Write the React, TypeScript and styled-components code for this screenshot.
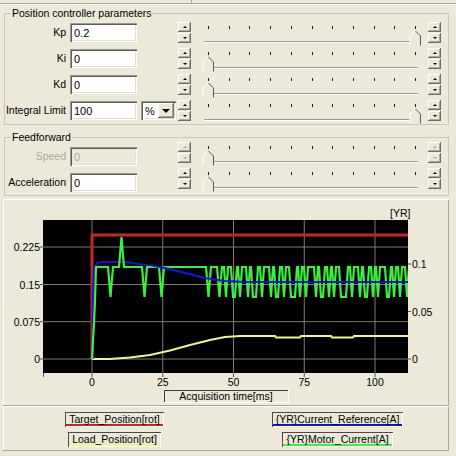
import React from 'react';
import styled, { createGlobalStyle } from 'styled-components';

const GlobalStyle = createGlobalStyle`
  html, body {
    margin: 0;
    padding: 0;
    background: #ece9d8;
  }
  body {
    width: 456px;
    height: 456px;
    overflow: hidden;
    font-family: "Liberation Sans", Arial, sans-serif;
    font-size: 10.5px;
    color: #000;
  }
`;

const Page = styled.div`
  width: 456px;
  height: 456px;
  background: #ece9d8;
`;

const TopStrip = styled.div`
  display: flex;
  height: 3px;
  border-bottom: 1px solid #aca899;
  box-shadow: 0 1px 0 #fff;
`;

const TopCell = styled.div`
  width: 191px;
  border-right: 1px solid #aca899;
`;

const Group = styled.fieldset<{ $top: number; $bottom: number }>`
  margin: ${p => p.$top}px 7px 0 4px;
  padding: 0 0 ${p => p.$bottom}px 0;
  border: 1px solid #c9c6b6;
  min-width: 0;
`;

const GroupTitle = styled.legend`
  margin-left: 5px;
  padding: 0 2px;
  line-height: 13px;
  font-size: 10.5px;
`;

const Rows = styled.div<{ $shift: number }>`
  margin-top: ${p => p.$shift}px;
`;

const Row = styled.div`
  display: grid;
  grid-template-columns: 61px 71px 41px 13px 237px 13px;
  height: 26px;
`;

const Label = styled.div<{ $top: number; $off?: boolean }>`
  margin-top: ${p => p.$top}px;
  height: 19px;
  line-height: 19px;
  text-align: right;
  white-space: nowrap;
  color: ${p => (p.$off ? '#aca899' : '#000')};
`;

const sunken = `
  box-shadow: inset 1px 1px 0 #9d9a8a, inset 2px 2px 0 #5f5d55,
    inset -1px -1px 0 #fff, inset -2px -2px 0 #e2dfd0;
`;

const raised = `
  box-shadow: inset -1px -1px 0 #716f64, inset 1px 1px 0 #fff,
    inset -2px -2px 0 #aca899;
`;

const Field = styled.input<{ $top: number; $off?: boolean }>`
  margin: ${p => p.$top}px 0 0 4px;
  width: 67px;
  height: 19px;
  box-sizing: border-box;
  border: none;
  outline: none;
  padding: 0 0 0 4px;
  font-family: "Liberation Sans", Arial, sans-serif;
  font-size: 11px;
  background: ${p => (p.$off ? '#ece9d8' : '#fff')};
  color: ${p => (p.$off ? '#aca899' : '#000')};
  ${sunken}
`;

const Combo = styled.div`
  margin: 3px 0 0 4px;
  width: 35px;
  height: 19px;
  box-sizing: border-box;
  background: #fff;
  display: flex;
  align-items: center;
  ${sunken}
`;

const ComboText = styled.span`
  flex: 1;
  padding-left: 4px;
  font-size: 11px;
`;

const ComboButton = styled.span`
  width: 16px;
  height: 15px;
  margin-right: 2px;
  background: #ece9d8;
  display: flex;
  align-items: center;
  justify-content: center;
  ${raised}
`;

const ComboArrow = styled.span`
  width: 0;
  height: 0;
  border-left: 4px solid transparent;
  border-right: 4px solid transparent;
  border-top: 4px solid #000;
`;

const Spin = styled.div<{ $top: number }>`
  margin-top: ${p => p.$top}px;
  width: 13px;
  display: flex;
  flex-direction: column;
  gap: 1px;
`;

const SpinButton = styled.div`
  height: 10px;
  background: #ece9d8;
  display: flex;
  align-items: center;
  justify-content: center;
  ${raised}
`;

const SpinArrow = styled.span<{ $dir: 'up' | 'down'; $off?: boolean }>`
  width: 0;
  height: 0;
  border-left: 2px solid transparent;
  border-right: 2px solid transparent;
  ${p =>
    p.$dir === 'up'
      ? `border-bottom: 2px solid ${p.$off ? '#aca899' : '#000'};`
      : `border-top: 2px solid ${p.$off ? '#aca899' : '#000'};`}
`;

const SliderSvg = styled.svg`
  display: block;
`;

const ChartPanel = styled.div`
  margin: 3px 7px 0 3px;
  height: 206px;
  box-shadow: inset 1px 1px 0 #fff, inset -1px 0 0 #aca899;
`;

const ChartSvg = styled.svg`
  display: block;
  font-family: "Liberation Sans", Arial, sans-serif;
  font-size: 10.5px;
`;

const LegendPanel = styled.div`
  margin: 0 7px 0 3px;
  height: 46px;
  border-top: 1px solid #aca899;
  border-bottom: 1px solid #aca899;
  box-shadow: inset 0 1px 0 #fff, inset 1px 0 0 #fff, inset -1px 0 0 #aca899;
  padding-top: 6px;
  box-sizing: border-box;
  display: grid;
  grid-template-columns: 1fr 1fr;
  grid-auto-rows: 15px;
  row-gap: 5px;
  justify-items: center;
`;

const LegendItem = styled.div<{ $color: string }>`
  height: 15px;
  line-height: 14px;
  padding: 0 4px;
  white-space: nowrap;
  box-shadow: inset 1px 1px 0 #4a4a4a, inset -1px -1px 0 #fff,
    inset 0 -3px 0 ${p => p.$color};
`;

const TICKS = Array.from({ length: 11 }, (_, i) => Math.round(17 + i * 20.7));

function Slider({ atEnd }: { atEnd?: boolean }) {
  const cx = atEnd ? 224 : 17;
  return (
    <SliderSvg width={237} height={26} viewBox="0 0 237 26">
      {TICKS.map(t => (
        <rect key={t} x={t} y={6} width={1} height={3} fill="#222" />
      ))}
      <rect x={13} y={21} width={214} height={1} fill="#9a988a" />
      <rect x={13} y={22} width={214} height={1} fill="#fff" />
      <polygon
        points={`${cx},11 ${cx + 5},16 ${cx + 5},25 ${cx - 5},25 ${cx - 5},16`}
        fill="#ece9d8"
      />
      <polyline
        points={`${cx - 5},25 ${cx - 5},16 ${cx},11`}
        fill="none"
        stroke="#fff"
      />
      <polyline
        points={`${cx + 0.5},11 ${cx + 5.5},16 ${cx + 5.5},25.5`}
        fill="none"
        stroke="#5a5850"
      />
    </SliderSvg>
  );
}

function Spinner({ top, off }: { top: number; off?: boolean }) {
  return (
    <Spin $top={top}>
      <SpinButton>
        <SpinArrow $dir="up" $off={off} />
      </SpinButton>
      <SpinButton>
        <SpinArrow $dir="down" $off={off} />
      </SpinButton>
    </Spin>
  );
}

type Param = { label: string; value: string; atEnd?: boolean; combo?: boolean; off?: boolean };

function ParamRow({ p, fieldTop, spinTop }: { p: Param; fieldTop: number; spinTop: number }) {
  return (
    <Row>
      <Label $top={fieldTop} $off={p.off}>
        {p.label}
      </Label>
      <Field $top={fieldTop} $off={p.off} defaultValue={p.value} readOnly />
      <div>
        {p.combo && (
          <Combo>
            <ComboText>%</ComboText>
            <ComboButton>
              <ComboArrow />
            </ComboButton>
          </Combo>
        )}
      </div>
      <Spinner top={spinTop} off={p.off} />
      <Slider atEnd={p.atEnd} />
      <Spinner top={spinTop} off={p.off} />
    </Row>
  );
}

const position: Param[] = [
  { label: 'Kp', value: '0.2', atEnd: true },
  { label: 'Ki', value: '0' },
  { label: 'Kd', value: '0' },
  { label: 'Integral Limit', value: '100', atEnd: true, combo: true },
];

const feedforward: Param[] = [
  { label: 'Speed', value: '0', off: true },
  { label: 'Acceleration', value: '0' },
];

// chart geometry, in page pixels
const xs = [92, 162.75, 233.5, 304.25, 375];
const xLabels = ['0', '25', '50', '75', '100'];
const leftTicks: [number, string][] = [
  [247, '0.225'],
  [284.5, '0.15'],
  [321.7, '0.075'],
  [359, '0'],
];
const rightTicks: [number, string][] = [
  [264, '0.1'],
  [311.5, '0.05'],
  [359, '0'],
];

const HI = 267;
const LO = 297;

function greenPath() {
  const pts: [number, number][] = [
    [92, 359], [93, 340], [94, 324], [95, 300], [96, HI],
    [108, HI], [110.5, LO], [113, HI],
    [119, HI], [121.5, 237], [124, HI],
    [142, HI], [144.5, LO], [147, HI],
    [159, HI], [161.5, LO], [164, HI],
    [206, HI], [208.5, LO], [211, HI],
    [217, HI], [219.5, LO], [222, HI],
  ];
  const seq = [
    [2, 0], [3, 2], [1, 0], [4, 0], [1, 3], [2, 0], [5, 0], [1, 2], [2, 0], [3, 4],
    [1, 0], [2, 0], [6, 0], [1, 2], [2, 0], [1, 0], [3, 5], [2, 0], [4, 0], [1, 2],
    [2, 0], [1, 0], [5, 2], [1, 0], [2, 0], [3, 0], [1, 4], [2, 0], [1, 0], [2, 2],
    [1, 0], [3, 0], [1, 0], [2, 0],
  ];
  let x = 222;
  let i = 0;
  while (x < 412) {
    const [h, l] = seq[i % seq.length];
    x += h;
    pts.push([x, HI]);
    x += 2;
    pts.push([x, LO]);
    if (l) {
      x += l;
      pts.push([x, LO]);
    }
    x += 2;
    pts.push([x, HI]);
    i++;
  }
  return pts.map(([a, b], k) => `${k ? 'L' : 'M'}${a},${b}`).join(' ');
}

const bluePts =
  '92.5,359 93,300 94,268 97,263 104,262 125,262 145,265 165,268 185,273 205,278 225,281 245,282 408,282';
const yellowPts =
  '92,359 110,359 130,357.5 150,355 170,350.5 190,345 210,340 225,337 240,336 275,336 276,337.5 300,337.5 301,336 331,336 332,337.5 353,337.5 354,336 408,336';

function Chart() {
  return (
    <ChartSvg width={446} height={206} viewBox="3 199 446 206">
      <defs>
        <clipPath id="plot">
          <rect x={43} y={220} width={365} height={153} />
        </clipPath>
      </defs>
      <rect x={43} y={220} width={365} height={153} fill="#000" />
      <g stroke="#7d7d7d" strokeWidth={1}>
        {xs.map(x => (
          <line key={x} x1={x} y1={220} x2={x} y2={373} />
        ))}
        {leftTicks.map(([y]) => (
          <line key={y} x1={43} y1={y} x2={408} y2={y} />
        ))}
      </g>
      <g stroke="#555" strokeWidth={1}>
        {xs.map(x => (
          <line key={x} x1={x} y1={373} x2={x} y2={377} />
        ))}
        {leftTicks.map(([y]) => (
          <line key={y} x1={40} y1={y} x2={43} y2={y} />
        ))}
        {rightTicks.map(([y]) => (
          <line key={y} x1={408} y1={y} x2={411} y2={y} />
        ))}
        <line x1={43.5} y1={373} x2={43.5} y2={377} />
      </g>
      <g clipPath="url(#plot)" fill="none" strokeLinejoin="miter">
        <path d="M92,359 V235 H410" stroke="#c42626" strokeWidth={3} />
        <polyline points={yellowPts} stroke="#f4f488" strokeWidth={2} />
        <polyline points={bluePts} stroke="#1414c8" strokeWidth={2.2} />
        <path d={greenPath()} stroke="#3cf03c" strokeWidth={2.2} />
        <polyline points="150,265 165,268 185,273 205,278 225,281 245,282 408,282" stroke="#1414c8" strokeWidth={2.2} />
      </g>
      <g fill="#000">
        {leftTicks.map(([y, t]) => (
          <text key={t} x={40} y={y + 4} textAnchor="end">
            {t}
          </text>
        ))}
        {rightTicks.map(([y, t]) => (
          <text key={t} x={412} y={y + 4}>
            {t}
          </text>
        ))}
        {xs.map((x, k) => (
          <text key={x} x={x} y={386} textAnchor="middle">
            {xLabels[k]}
          </text>
        ))}
        <text x={390} y={217}>
          [YR]
        </text>
      </g>
      <rect x={164} y={390} width={124} height={12} fill="#ece9d8" />
      <path d="M164.5,402 V390.5 H288" stroke="#3a3a3a" fill="none" />
      <path d="M288.5,390 V402.5 H164" stroke="#fff" fill="none" />
      <text x={226} y={400} textAnchor="middle">
        Acquisition time[ms]
      </text>
    </ChartSvg>
  );
}

export default function App() {
  return (
    <Page>
      <GlobalStyle />
      <TopStrip>
        <TopCell />
      </TopStrip>
      <Group $top={3} $bottom={0}>
        <GroupTitle>Position controller parameters</GroupTitle>
        <Rows $shift={0}>
          {position.map(p => (
            <ParamRow key={p.label} p={p} fieldTop={3} spinTop={2} />
          ))}
        </Rows>
      </Group>
      <Group $top={6} $bottom={3}>
        <GroupTitle>Feedforward</GroupTitle>
        <Rows $shift={-4}>
          {feedforward.map(p => (
            <ParamRow key={p.label} p={p} fieldTop={7} spinTop={2} />
          ))}
        </Rows>
      </Group>
      <ChartPanel>
        <Chart />
      </ChartPanel>
      <LegendPanel>
        <LegendItem $color="#c42626">Target_Position[rot]</LegendItem>
        <LegendItem $color="#1414c8">{'{YR}Current_Reference[A]'}</LegendItem>
        <LegendItem $color="#f4f488">Load_Position[rot]</LegendItem>
        <LegendItem $color="#3cf03c">{'{YR}Motor_Current[A]'}</LegendItem>
      </LegendPanel>
    </Page>
  );
}
